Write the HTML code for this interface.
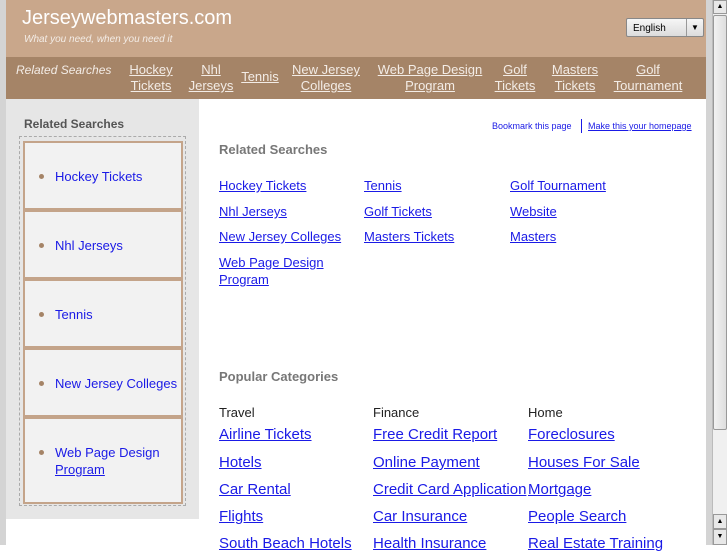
<!DOCTYPE html>
<html><head><meta charset="utf-8"><style>
*{margin:0;padding:0;box-sizing:border-box}
body{width:727px;height:545px;overflow:hidden;background:#fff;font-family:"Liberation Sans",sans-serif;position:relative}
.a{position:absolute}
a{color:#1a1ae6;text-decoration:underline}
.nav a{color:#f3ece6;text-align:center;font-size:13px;line-height:16px;position:absolute}
.sb{background:#f2f2f2;border:2px solid #c4a48a;position:absolute;left:23px;width:160px}
.sb span{position:absolute;left:30px;font-size:13px;color:#1a1ae6;line-height:17px}
.sb i{position:absolute;left:14px;width:5px;height:5px;border-radius:50%;background:#a58467}
.l{position:absolute;font-size:13px;color:#1a1ae6;text-decoration:underline;line-height:17px}
.p{position:absolute;font-size:15px;color:#1a1ae6;text-decoration:underline;line-height:18px}
.c{position:absolute;font-size:13px;color:#222}
</style></head><body>
<div class="a" style="left:0;top:0;width:6px;height:545px;background:#d4d4d4"></div>
<div class="a" style="left:706px;top:0;width:6px;height:545px;background:#d4d4d4"></div>
<div class="a" style="left:6px;top:0;width:700px;height:57px;background:#c9a78b"></div>
<div class="a" style="left:22px;top:7px;font-size:20px;color:#fff">Jerseywebmasters.com</div>
<div class="a" style="left:24px;top:34px;font-size:10px;color:#f3ece6;font-style:italic">What you need, when you need it</div>
<div class="a" style="left:626px;top:18px;width:78px;height:19px;background:linear-gradient(#f6f6f6,#dcdcdc);border:1px solid #888;border-radius:2px;font-size:10px;padding:4px 0 0 6px">English</div>
<div class="a" style="left:686px;top:19px;width:17px;height:17px;border-left:1px solid #999;font-size:8px;text-align:center;line-height:17px">▼</div>
<div class="a nav" style="left:6px;top:57px;width:700px;height:42px;background:#a58467">
<div class="a" style="left:10px;top:6px;font-size:12px;font-style:italic;color:#f3ece6">Related Searches</div>
<a style="left:118px;top:5px;width:54px">Hockey<br>Tickets</a>
<a style="left:181px;top:5px;width:48px">Nhl<br>Jerseys</a>
<a style="left:233px;top:12px;width:42px">Tennis</a>
<a style="left:283px;top:5px;width:74px">New Jersey<br>Colleges</a>
<a style="left:368px;top:5px;width:112px">Web Page Design<br>Program</a>
<a style="left:484px;top:5px;width:50px">Golf<br>Tickets</a>
<a style="left:542px;top:5px;width:54px">Masters<br>Tickets</a>
<a style="left:600px;top:5px;width:84px">Golf<br>Tournament</a>
</div>
<div class="a" style="left:6px;top:99px;width:193px;height:420px;background:#e6e6e6"></div>
<div class="a" style="left:24px;top:117px;font-size:12px;font-weight:bold;color:#555">Related Searches</div>
<div class="a" style="left:19px;top:136px;width:167px;height:370px;border:1px dashed #aaa"></div>
<div class="sb" style="top:141px;height:69px"><i style="top:31px"></i><span style="top:25px">Hockey Tickets</span></div>
<div class="sb" style="top:210px;height:69px"><i style="top:31px"></i><span style="top:25px">Nhl Jerseys</span></div>
<div class="sb" style="top:279px;height:69px"><i style="top:31px"></i><span style="top:25px">Tennis</span></div>
<div class="sb" style="top:348px;height:69px"><i style="top:31px"></i><span style="top:25px">New Jersey Colleges</span></div>
<div class="sb" style="top:417px;height:87px"><i style="top:31px"></i><span style="top:25px">Web Page Design<br><u>Program</u></span></div>
<div class="a" style="left:492px;top:121px;font-size:9px;color:#1a1ae6">Bookmark this page</div>
<div class="a" style="left:581px;top:119px;width:1px;height:14px;background:#1a1ae6"></div>
<div class="a" style="left:588px;top:121px;font-size:9px;color:#1a1ae6;text-decoration:underline">Make this your homepage</div>
<div class="a" style="left:219px;top:142px;font-size:13px;font-weight:bold;color:#777">Related Searches</div>
<div class="l" style="left:219px;top:177px">Hockey Tickets</div>
<div class="l" style="left:219px;top:203px">Nhl Jerseys</div>
<div class="l" style="left:219px;top:228px">New Jersey Colleges</div>
<div class="l" style="left:219px;top:254px">Web Page Design<br>Program</div>
<div class="l" style="left:364px;top:177px">Tennis</div>
<div class="l" style="left:364px;top:203px">Golf Tickets</div>
<div class="l" style="left:364px;top:228px">Masters Tickets</div>
<div class="l" style="left:510px;top:177px">Golf Tournament</div>
<div class="l" style="left:510px;top:203px">Website</div>
<div class="l" style="left:510px;top:228px">Masters</div>
<div class="a" style="left:219px;top:369px;font-size:13px;font-weight:bold;color:#777">Popular Categories</div>
<div class="c" style="left:219px;top:405px">Travel</div>
<div class="c" style="left:373px;top:405px">Finance</div>
<div class="c" style="left:528px;top:405px">Home</div>
<div class="p" style="left:219px;top:426px">Airline Tickets</div>
<div class="p" style="left:219px;top:454px">Hotels</div>
<div class="p" style="left:219px;top:481px">Car Rental</div>
<div class="p" style="left:219px;top:508px">Flights</div>
<div class="p" style="left:219px;top:535px">South Beach Hotels</div>
<div class="p" style="left:373px;top:426px">Free Credit Report</div>
<div class="p" style="left:373px;top:454px">Online Payment</div>
<div class="p" style="left:373px;top:481px">Credit Card Application</div>
<div class="p" style="left:373px;top:508px">Car Insurance</div>
<div class="p" style="left:373px;top:535px">Health Insurance</div>
<div class="p" style="left:528px;top:426px">Foreclosures</div>
<div class="p" style="left:528px;top:454px">Houses For Sale</div>
<div class="p" style="left:528px;top:481px">Mortgage</div>
<div class="p" style="left:528px;top:508px">People Search</div>
<div class="p" style="left:528px;top:535px">Real Estate Training</div>
<div class="a" style="left:712px;top:0;width:15px;height:545px;background:#f0f0f0;border-left:1px solid #bbb"></div>
<div class="a" style="left:713px;top:0;width:14px;height:14px;background:#e8e8e8;border:1px solid #999;font-size:7px;text-align:center;line-height:12px">▲</div>
<div class="a" style="left:713px;top:15px;width:14px;height:415px;background:linear-gradient(90deg,#f2f2f2,#dedede);border:1px solid #999;border-radius:2px"></div>
<div class="a" style="left:713px;top:514px;width:14px;height:15px;background:#e8e8e8;border:1px solid #999;font-size:7px;text-align:center;line-height:13px">▲</div>
<div class="a" style="left:713px;top:529px;width:14px;height:16px;background:#e8e8e8;border:1px solid #999;font-size:7px;text-align:center;line-height:14px">▼</div>
</body></html>
